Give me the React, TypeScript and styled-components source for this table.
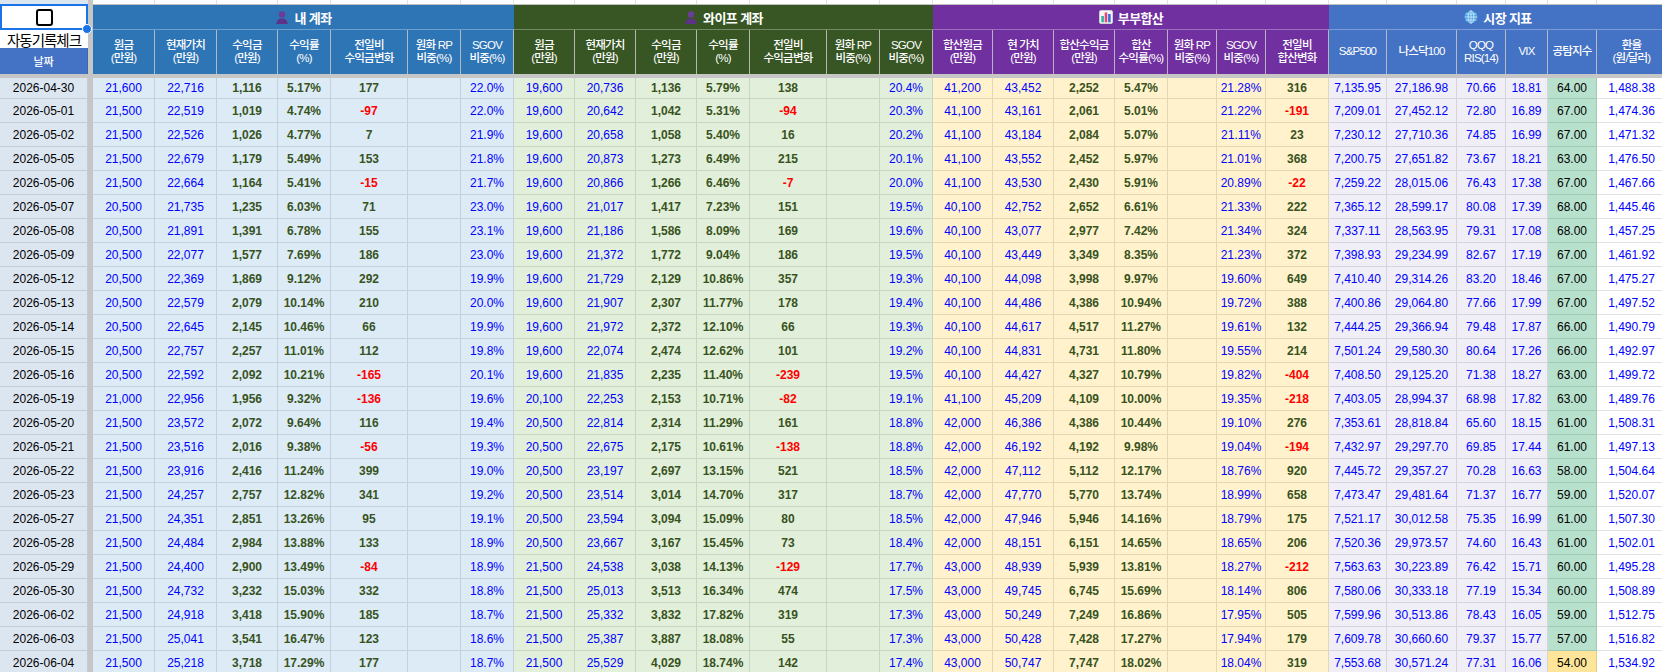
import React from "react";
import styled, { createGlobalStyle } from "styled-components";

type Tone = "blue" | "olive" | "change" | "black";

type Group = {
  title: string;
  icon: "person" | "chart" | "globe";
  head: string;
  body: string;
  widths: number[];
  labels: string[][];
};

const GROUPS: Group[] = [
  {
    title: "내 계좌",
    icon: "person",
    head: "#2e75b6",
    body: "#ddebf7",
    widths: [62, 62, 61, 53, 77, 53, 53],
    labels: [
      ["원금", "(만원)"],
      ["현재가치", "(만원)"],
      ["수익금", "(만원)"],
      ["수익률", "(%)"],
      ["전일비", "수익금변화"],
      ["원화 RP", "비중(%)"],
      ["SGOV", "비중(%)"],
    ],
  },
  {
    title: "와이프 계좌",
    icon: "person",
    head: "#375623",
    body: "#e2efda",
    widths: [61, 61, 61, 53, 77, 53, 53],
    labels: [
      ["원금", "(만원)"],
      ["현재가치", "(만원)"],
      ["수익금", "(만원)"],
      ["수익률", "(%)"],
      ["전일비", "수익금변화"],
      ["원화 RP", "비중(%)"],
      ["SGOV", "비중(%)"],
    ],
  },
  {
    title: "부부합산",
    icon: "chart",
    head: "#7030a0",
    body: "#fff2cc",
    widths: [60, 61, 61, 53, 49, 49, 63],
    labels: [
      ["합산원금", "(만원)"],
      ["현 가치", "(만원)"],
      ["합산수익금", "(만원)"],
      ["합산", "수익률(%)"],
      ["원화 RP", "비중(%)"],
      ["SGOV", "비중(%)"],
      ["전일비", "합산변화"],
    ],
  },
  {
    title: "시장 지표",
    icon: "globe",
    head: "#4472c4",
    body: "#f0eef6",
    widths: [58, 70, 49, 42, 49, 70],
    labels: [
      ["S&P500"],
      ["나스닥100"],
      ["QQQ", "RIS(14)"],
      ["VIX"],
      ["공탐지수"],
      ["환율", "(원/달러)"],
    ],
  },
];

const DATE_W = 88;
const GAP_W = 5;
const TEMPLATE = [DATE_W, GAP_W, ...GROUPS.flatMap((g) => g.widths)]
  .map((w) => `${w}px`)
  .join(" ");

// date | my: 원금 현재 수익금 수익률 전일비 SGOV | wife: same | couple: 원금 현가치 수익금 수익률 SGOV 전일비 | market x6
const RAW = `
2026-04-30 21,600 22,716 1,116 5.17% 177 22.0% 19,600 20,736 1,136 5.79% 138 20.4% 41,200 43,452 2,252 5.47% 21.28% 316 7,135.95 27,186.98 70.66 18.81 64.00 1,488.38
2026-05-01 21,500 22,519 1,019 4.74% -97 22.0% 19,600 20,642 1,042 5.31% -94 20.3% 41,100 43,161 2,061 5.01% 21.22% -191 7,209.01 27,452.12 72.80 16.89 67.00 1,474.36
2026-05-02 21,500 22,526 1,026 4.77% 7 21.9% 19,600 20,658 1,058 5.40% 16 20.2% 41,100 43,184 2,084 5.07% 21.11% 23 7,230.12 27,710.36 74.85 16.99 67.00 1,471.32
2026-05-05 21,500 22,679 1,179 5.49% 153 21.8% 19,600 20,873 1,273 6.49% 215 20.1% 41,100 43,552 2,452 5.97% 21.01% 368 7,200.75 27,651.82 73.67 18.21 63.00 1,476.50
2026-05-06 21,500 22,664 1,164 5.41% -15 21.7% 19,600 20,866 1,266 6.46% -7 20.0% 41,100 43,530 2,430 5.91% 20.89% -22 7,259.22 28,015.06 76.43 17.38 67.00 1,467.66
2026-05-07 20,500 21,735 1,235 6.03% 71 23.0% 19,600 21,017 1,417 7.23% 151 19.5% 40,100 42,752 2,652 6.61% 21.33% 222 7,365.12 28,599.17 80.08 17.39 68.00 1,445.46
2026-05-08 20,500 21,891 1,391 6.78% 155 23.1% 19,600 21,186 1,586 8.09% 169 19.6% 40,100 43,077 2,977 7.42% 21.34% 324 7,337.11 28,563.95 79.31 17.08 68.00 1,457.25
2026-05-09 20,500 22,077 1,577 7.69% 186 23.0% 19,600 21,372 1,772 9.04% 186 19.5% 40,100 43,449 3,349 8.35% 21.23% 372 7,398.93 29,234.99 82.67 17.19 67.00 1,461.92
2026-05-12 20,500 22,369 1,869 9.12% 292 19.9% 19,600 21,729 2,129 10.86% 357 19.3% 40,100 44,098 3,998 9.97% 19.60% 649 7,410.40 29,314.26 83.20 18.46 67.00 1,475.27
2026-05-13 20,500 22,579 2,079 10.14% 210 20.0% 19,600 21,907 2,307 11.77% 178 19.4% 40,100 44,486 4,386 10.94% 19.72% 388 7,400.86 29,064.80 77.66 17.99 67.00 1,497.52
2026-05-14 20,500 22,645 2,145 10.46% 66 19.9% 19,600 21,972 2,372 12.10% 66 19.3% 40,100 44,617 4,517 11.27% 19.61% 132 7,444.25 29,366.94 79.48 17.87 66.00 1,490.79
2026-05-15 20,500 22,757 2,257 11.01% 112 19.8% 19,600 22,074 2,474 12.62% 101 19.2% 40,100 44,831 4,731 11.80% 19.55% 214 7,501.24 29,580.30 80.64 17.26 66.00 1,492.97
2026-05-16 20,500 22,592 2,092 10.21% -165 20.1% 19,600 21,835 2,235 11.40% -239 19.5% 40,100 44,427 4,327 10.79% 19.82% -404 7,408.50 29,125.20 71.38 18.27 63.00 1,499.72
2026-05-19 21,000 22,956 1,956 9.32% -136 19.6% 20,100 22,253 2,153 10.71% -82 19.1% 41,100 45,209 4,109 10.00% 19.35% -218 7,403.05 28,994.37 68.98 17.82 63.00 1,489.76
2026-05-20 21,500 23,572 2,072 9.64% 116 19.4% 20,500 22,814 2,314 11.29% 161 18.8% 42,000 46,386 4,386 10.44% 19.10% 276 7,353.61 28,818.84 65.60 18.15 61.00 1,508.31
2026-05-21 21,500 23,516 2,016 9.38% -56 19.3% 20,500 22,675 2,175 10.61% -138 18.8% 42,000 46,192 4,192 9.98% 19.04% -194 7,432.97 29,297.70 69.85 17.44 61.00 1,497.13
2026-05-22 21,500 23,916 2,416 11.24% 399 19.0% 20,500 23,197 2,697 13.15% 521 18.5% 42,000 47,112 5,112 12.17% 18.76% 920 7,445.72 29,357.27 70.28 16.63 58.00 1,504.64
2026-05-23 21,500 24,257 2,757 12.82% 341 19.2% 20,500 23,514 3,014 14.70% 317 18.7% 42,000 47,770 5,770 13.74% 18.99% 658 7,473.47 29,481.64 71.37 16.77 59.00 1,520.07
2026-05-27 21,500 24,351 2,851 13.26% 95 19.1% 20,500 23,594 3,094 15.09% 80 18.5% 42,000 47,946 5,946 14.16% 18.79% 175 7,521.17 30,012.58 75.35 16.99 61.00 1,507.30
2026-05-28 21,500 24,484 2,984 13.88% 133 18.9% 20,500 23,667 3,167 15.45% 73 18.4% 42,000 48,151 6,151 14.65% 18.65% 206 7,520.36 29,973.57 74.60 16.43 61.00 1,502.01
2026-05-29 21,500 24,400 2,900 13.49% -84 18.9% 21,500 24,538 3,038 14.13% -129 17.7% 43,000 48,939 5,939 13.81% 18.27% -212 7,563.63 30,223.89 76.42 15.71 60.00 1,495.28
2026-05-30 21,500 24,732 3,232 15.03% 332 18.8% 21,500 25,013 3,513 16.34% 474 17.5% 43,000 49,745 6,745 15.69% 18.14% 806 7,580.06 30,333.18 77.19 15.34 60.00 1,508.89
2026-06-02 21,500 24,918 3,418 15.90% 185 18.7% 21,500 25,332 3,832 17.82% 319 17.3% 43,000 50,249 7,249 16.86% 17.95% 505 7,599.96 30,513.86 78.43 16.05 59.00 1,512.75
2026-06-03 21,500 25,041 3,541 16.47% 123 18.6% 21,500 25,387 3,887 18.08% 55 17.3% 43,000 50,428 7,428 17.27% 17.94% 179 7,609.78 30,660.60 79.37 15.77 57.00 1,516.82
2026-06-04 21,500 25,218 3,718 17.29% 177 18.7% 21,500 25,529 4,029 18.74% 142 17.4% 43,000 50,747 7,747 18.02% 18.04% 319 7,553.68 30,571.24 77.31 16.06 54.00 1,534.92
`;

type CellData = { text: string; tone: Tone; bg: string };

const account = (v: string[], bg: string): CellData[] => [
  { text: v[0], tone: "blue", bg },
  { text: v[1], tone: "blue", bg },
  { text: v[2], tone: "olive", bg },
  { text: v[3], tone: "olive", bg },
  { text: v[4], tone: "change", bg },
  { text: "", tone: "blue", bg },
  { text: v[5], tone: "blue", bg },
];

const rows = RAW.trim()
  .split("\n")
  .map((line) => {
    const t = line.trim().split(/\s+/);
    const my = t.slice(1, 7);
    const wife = t.slice(7, 13);
    const both = t.slice(13, 19);
    const mk = t.slice(19, 25);
    const coupleBg = GROUPS[2].body;
    const mkBg = GROUPS[3].body;
    const cells: CellData[] = [
      ...account(my, GROUPS[0].body),
      ...account(wife, GROUPS[1].body),
      { text: both[0], tone: "blue", bg: coupleBg },
      { text: both[1], tone: "blue", bg: coupleBg },
      { text: both[2], tone: "olive", bg: coupleBg },
      { text: both[3], tone: "olive", bg: coupleBg },
      { text: "", tone: "blue", bg: coupleBg },
      { text: both[4], tone: "blue", bg: coupleBg },
      { text: both[5], tone: "change", bg: coupleBg },
      { text: mk[0], tone: "blue", bg: mkBg },
      { text: mk[1], tone: "blue", bg: mkBg },
      { text: mk[2], tone: "blue", bg: mkBg },
      { text: mk[3], tone: "blue", bg: mkBg },
      { text: mk[4], tone: "black", bg: parseFloat(mk[4]) < 55 ? "#ffe599" : "#b7e1cd" },
      { text: mk[5], tone: "blue", bg: "#ffffff" },
    ];
    return { date: t[0], cells };
  });

const GlobalStyle = createGlobalStyle`
  html, body {
    margin: 0;
    padding: 0;
    background: #ffffff;
    overflow: hidden;
  }
  body {
    font-family: "Liberation Sans", "Noto Sans CJK KR", sans-serif;
  }
`;

const Sheet = styled.div`
  width: 1667px;
  overflow: hidden;
`;

const Header = styled.div`
  display: flex;
  border-bottom: 4px solid #c6c6c6;
`;

const LeftHead = styled.div`
  width: ${DATE_W}px;
  display: flex;
  flex-direction: column;
  position: relative;
  z-index: 2;
`;

const Strip = styled.div<{ $bg: string }>`
  height: 4px;
  background: ${(p) => p.$bg};
`;

const CheckCell = styled.div`
  height: 26px;
  box-sizing: border-box;
  border: 2px solid #1a73e8;
  background: #ffffff;
  display: flex;
  align-items: center;
  justify-content: center;
  position: relative;
`;

const CheckBox = styled.div`
  width: 17px;
  height: 17px;
  box-sizing: border-box;
  border: 2.5px solid #000000;
  border-radius: 3px;
`;

const Handle = styled.div`
  position: absolute;
  right: -6px;
  bottom: -6px;
  width: 8px;
  height: 8px;
  border-radius: 50%;
  background: #1a73e8;
  border: 1px solid #ffffff;
`;

const AutoLabel = styled.div`
  height: 18px;
  background: #ffffff;
  display: flex;
  align-items: center;
  justify-content: center;
  font-size: 14.5px;
  letter-spacing: -1px;
  color: #000000;
  white-space: nowrap;
  overflow: visible;
`;

const DateHead = styled.div`
  height: 26px;
  background: #4472c4;
  color: #ffffff;
  font-size: 11px;
  font-weight: 500;
  display: flex;
  align-items: center;
  justify-content: center;
  border-right: 1px solid rgba(0, 0, 0, 0.1);
  box-sizing: border-box;
`;

const FreezeBar = styled.div`
  width: ${GAP_W}px;
  background: #c6c6c6;
  flex: none;
`;

const GroupHead = styled.div`
  display: flex;
  flex-direction: column;
  flex: none;
`;

const StripGrid = styled.div<{ $cols: string }>`
  display: grid;
  grid-template-columns: ${(p) => p.$cols};
  height: 5px;
  box-sizing: border-box;
  border-bottom: 1px solid #c0c0c0;
  background: #ffffff;

  & > div {
    border-right: 1px solid #e1e1e1;
  }
`;

const GroupTitle = styled.div<{ $bg: string }>`
  height: 25px;
  box-sizing: border-box;
  background: ${(p) => p.$bg};
  border-bottom: 1px solid rgba(255, 255, 255, 0.3);
  color: #ffffff;
  display: flex;
  align-items: center;
  justify-content: center;
  gap: 5px;
  font-size: 13px;
  font-weight: 700;
  letter-spacing: -0.6px;
`;

const SubGrid = styled.div<{ $cols: string }>`
  display: grid;
  grid-template-columns: ${(p) => p.$cols};
  height: 44px;
`;

const SubCell = styled.div<{ $bg: string }>`
  background: ${(p) => p.$bg};
  border-right: 1px solid rgba(200, 200, 200, 0.85);
  color: #ffffff;
  display: flex;
  flex-direction: column;
  align-items: center;
  justify-content: center;
  font-size: 11.5px;
  font-weight: 500;
  line-height: 13.5px;
  letter-spacing: -0.8px;
  text-align: center;
  white-space: nowrap;
`;

const Row = styled.div<{ $h: number }>`
  display: grid;
  grid-template-columns: ${TEMPLATE};
  height: ${(p) => p.$h}px;
`;

const GapCell = styled.div`
  background: #c6c6c6;
`;

const toneColor = (tone: Tone, text: string) => {
  if (tone === "change") return text.startsWith("-") ? "#ff0000" : "#38531d";
  if (tone === "olive") return "#38531d";
  if (tone === "black") return "#000000";
  return "#0000ff";
};

const Cell = styled.div<{ $bg: string; $color: string; $bold: boolean }>`
  background: ${(p) => p.$bg};
  color: ${(p) => p.$color};
  font-weight: ${(p) => (p.$bold ? 700 : 400)};
  font-size: 12px;
  display: flex;
  align-items: center;
  justify-content: center;
  box-sizing: border-box;
  border-right: 1px solid rgba(0, 0, 0, 0.11);
  border-bottom: 1px solid rgba(0, 0, 0, 0.11);
  white-space: nowrap;
  overflow: hidden;
`;

const PersonIcon = () => (
  <svg width="14" height="14" viewBox="0 0 16 16">
    <circle cx="8" cy="5" r="3.7" fill="#6a3e98" />
    <path d="M1.5 16 C1.8 11.2 4.6 9.6 8 9.6 C11.4 9.6 14.2 11.2 14.5 16 Z" fill="#5c3389" />
  </svg>
);

const ChartIcon = () => (
  <svg width="14" height="14" viewBox="0 0 14 14">
    <rect x="0.5" y="0.5" width="13" height="13" rx="1.5" fill="#f5f5f5" stroke="#cfcfcf" />
    <rect x="2.3" y="6" width="2.6" height="6.3" fill="#2fb3a0" />
    <rect x="5.7" y="2.5" width="2.6" height="9.8" fill="#e2467c" />
    <rect x="9.1" y="4" width="2.6" height="8.3" fill="#3d6fd9" />
  </svg>
);

const GlobeIcon = () => (
  <svg width="14" height="14" viewBox="0 0 14 14">
    <circle cx="7" cy="7" r="6.3" fill="#4aa3e6" />
    <g fill="none" stroke="#d8ecfb" strokeWidth="0.8">
      <ellipse cx="7" cy="7" rx="2.8" ry="6.3" />
      <line x1="7" y1="0.7" x2="7" y2="13.3" />
      <line x1="0.7" y1="7" x2="13.3" y2="7" />
      <path d="M1.6 4 H12.4 M1.6 10 H12.4" />
    </g>
  </svg>
);

const icons = { person: <PersonIcon />, chart: <ChartIcon />, globe: <GlobeIcon /> };

export default function App() {
  return (
    <>
      <GlobalStyle />
      <Sheet>
        <Header>
          <LeftHead>
            <Strip $bg="#dce6f1" />
            <CheckCell>
              <CheckBox />
              <Handle />
            </CheckCell>
            <AutoLabel>자동기록체크</AutoLabel>
            <DateHead>날짜</DateHead>
          </LeftHead>
          <FreezeBar />
          {GROUPS.map((g) => {
            const cols = g.widths.map((w) => `${w}px`).join(" ");
            return (
              <GroupHead key={g.title}>
                <StripGrid $cols={cols}>
                  {g.widths.map((_, i) => (
                    <div key={i} />
                  ))}
                </StripGrid>
                <GroupTitle $bg={g.head}>
                  {icons[g.icon]}
                  <span>{g.title}</span>
                </GroupTitle>
                <SubGrid $cols={cols}>
                  {g.labels.map((lines, i) => (
                    <SubCell key={i} $bg={g.head}>
                      {lines.map((l) => (
                        <span key={l}>{l}</span>
                      ))}
                    </SubCell>
                  ))}
                </SubGrid>
              </GroupHead>
            );
          })}
        </Header>
        {rows.map((r, ri) => (
          <Row key={r.date} $h={ri === 0 ? 21 : 24}>
            <Cell $bg="#dce6f1" $color="#000000" $bold={false}>
              {r.date}
            </Cell>
            <GapCell />
            {r.cells.map((c, i) => (
              <Cell
                key={i}
                $bg={c.bg}
                $color={toneColor(c.tone, c.text)}
                $bold={c.tone === "olive" || c.tone === "change"}
              >
                {c.text}
              </Cell>
            ))}
          </Row>
        ))}
      </Sheet>
    </>
  );
}
